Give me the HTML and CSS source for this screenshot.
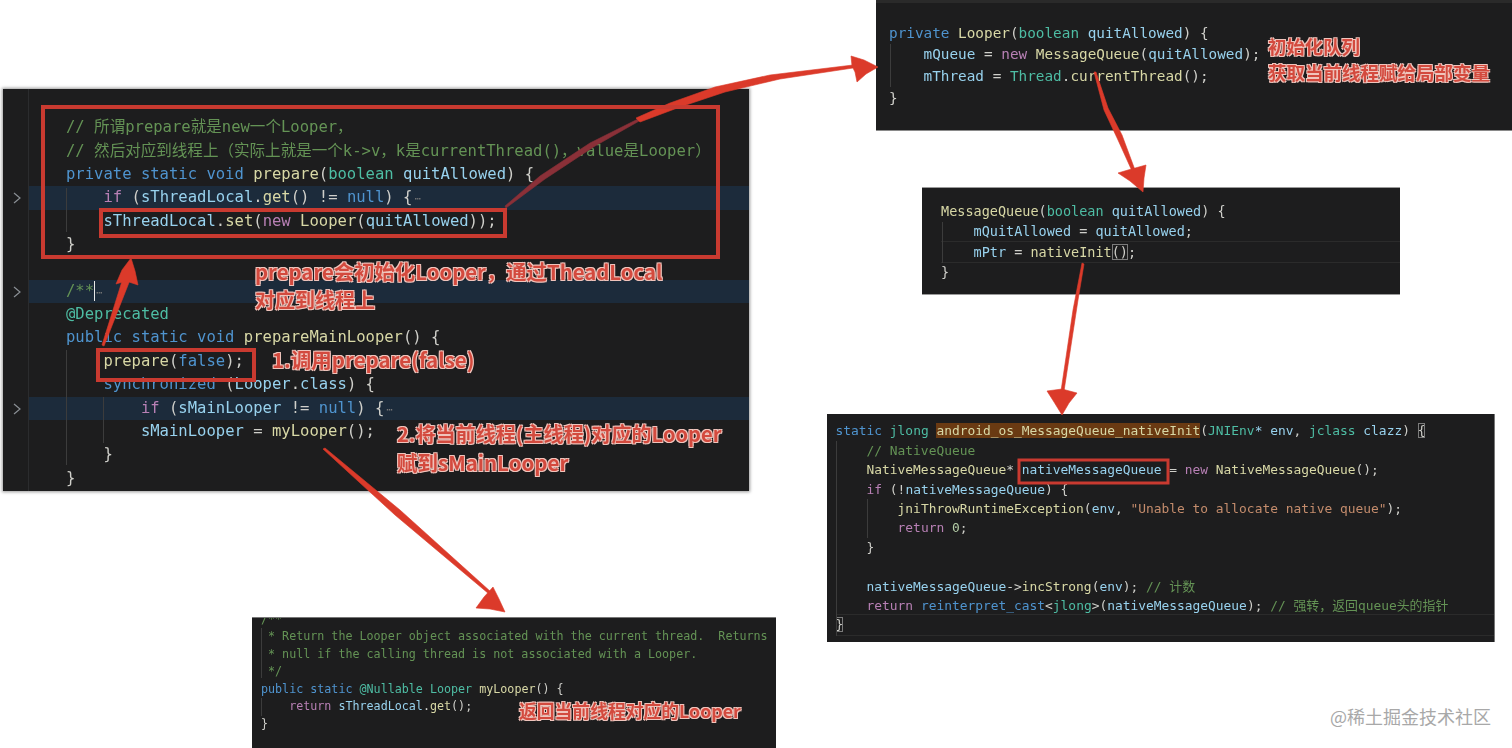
FILE: index.html
```html
<!DOCTYPE html>
<html lang="zh">
<head>
<meta charset="utf-8">
<title>Looper prepare</title>
<link rel="stylesheet" href="styles.css">
</head>
<body>
<main class="canvas">

<section class="panel panel-a">
  <i class="guide ga1"></i><i class="guide ga2"></i><i class="guide ga3"></i><i class="gutter-rule"></i>
  <div class="line"><span class="c">// 所谓prepare就是new一个Looper，</span></div>
  <div class="line"><span class="c">// 然后对应到线程上（实际上就是一个k-&gt;v，k是currentThread()，value是Looper）</span></div>
  <div class="line"><span class="k">private static void</span> <span class="f">prepare</span>(<span class="t">boolean</span> <span class="v">quitAllowed</span>) {</div>
  <div class="line hl"><svg class="chev" viewBox="0 0 8 12"><path d="M1 1l6 5-6 5"/></svg>    <span class="p">if</span> (<span class="v">sThreadLocal</span>.<span class="f">get</span>() != <span class="k">null</span>) {<span class="fold">⋯</span></div>
  <div class="line">    <span class="v">sThreadLocal</span>.<span class="f">set</span>(<span class="p">new</span> <span class="f">Looper</span>(<span class="v">quitAllowed</span>));</div>
  <div class="line">}</div>
  <div class="line"></div>
  <div class="line hl"><svg class="chev" viewBox="0 0 8 12"><path d="M1 1l6 5-6 5"/></svg><span class="c">/**</span><i class="cursor"></i><span class="fold">⋯</span></div>
  <div class="line"><span class="t">@Deprecated</span></div>
  <div class="line"><span class="k">public static void</span> <span class="f">prepareMainLooper</span>() {</div>
  <div class="line">    <span class="f">prepare</span>(<span class="k">false</span>);</div>
  <div class="line">    <span class="k">synchronized</span> (<span class="v">Looper</span>.<span class="v">class</span>) {</div>
  <div class="line hl"><svg class="chev" viewBox="0 0 8 12"><path d="M1 1l6 5-6 5"/></svg>        <span class="p">if</span> (<span class="v">sMainLooper</span> != <span class="k">null</span>) {<span class="fold">⋯</span></div>
  <div class="line">        <span class="v">sMainLooper</span> = <span class="f">myLooper</span>();</div>
  <div class="line">    }</div>
  <div class="line">}</div>
</section>

<section class="panel panel-b">
  <i class="guide gb1"></i>
  <div class="line"><span class="k">private</span> <span class="f">Looper</span>(<span class="t">boolean</span> <span class="v">quitAllowed</span>) {</div>
  <div class="line">    <span class="v">mQueue</span> = <span class="p">new</span> <span class="f">MessageQueue</span>(<span class="v">quitAllowed</span>);</div>
  <div class="line">    <span class="v">mThread</span> = <span class="t">Thread</span>.<span class="f">currentThread</span>();</div>
  <div class="line">}</div>
</section>

<section class="panel panel-c">
  <i class="guide gc1"></i>
  <div class="line"><span class="f">MessageQueue</span>(<span class="t">boolean</span> <span class="v">quitAllowed</span>) {</div>
  <div class="line">    <span class="v">mQuitAllowed</span> = <span class="v">quitAllowed</span>;</div>
  <div class="line rowline">    <span class="v">mPtr</span> = <span class="f">nativeInit</span><span class="bracket">()</span>;</div>
  <div class="line">}</div>
</section>

<section class="panel panel-d">
  <i class="guide gd1"></i><i class="guide gd2"></i>
  <div class="line"><span class="k">static</span> <span class="t">jlong</span> <span class="f mark">android_os_MessageQueue_nativeInit</span>(<span class="t">JNIEnv</span><span class="v">*</span> <span class="v">env</span>, <span class="t">jclass</span> <span class="v">clazz</span>) <span class="bracket">{</span></div>
  <div class="line">    <span class="c">// NativeQueue</span></div>
  <div class="line">    <span class="f">NativeMessageQueue</span>* <span class="v">nativeMessageQueue</span> = <span class="p">new</span> <span class="f">NativeMessageQueue</span>();</div>
  <div class="line">    <span class="p">if</span> (!<span class="v">nativeMessageQueue</span>) {</div>
  <div class="line">        <span class="f">jniThrowRuntimeException</span>(<span class="v">env</span>, <span class="s">"Unable to allocate native queue"</span>);</div>
  <div class="line">        <span class="p">return</span> <span class="n">0</span>;</div>
  <div class="line">    }</div>
  <div class="line"></div>
  <div class="line">    <span class="v">nativeMessageQueue</span>-&gt;<span class="f">incStrong</span>(<span class="v">env</span>); <span class="c">// 计数</span></div>
  <div class="line">    <span class="p">return</span> <span class="k">reinterpret_cast</span>&lt;<span class="t">jlong</span>&gt;(<span class="v">nativeMessageQueue</span>); <span class="c">// 强转，返回queue头的指针</span></div>
  <div class="line rowline"><span class="bracket">}</span></div>
</section>

<section class="panel panel-e">
  <i class="guide ge1"></i><i class="guide ge2"></i>
  <div class="line"><span class="c">/**</span></div>
  <div class="line"><span class="c"> * Return the Looper object associated with the current thread.  Returns</span></div>
  <div class="line"><span class="c"> * null if the calling thread is not associated with a Looper.</span></div>
  <div class="line"><span class="c"> */</span></div>
  <div class="line"><span class="k">public static</span> <span class="t">@Nullable</span> <span class="t">Looper</span> <span class="f">myLooper</span>() {</div>
  <div class="line">    <span class="p">return</span> <span class="v">sThreadLocal</span>.<span class="f">get</span>();</div>
  <div class="line">}</div>
</section>

<svg class="arrows" viewBox="0 0 1512 748" aria-hidden="true">
  <g class="ink">
    <polygon class="thin" points="505,206 540,176 590,143 640,118 641,120 595,146 545,179 506,208"/>
    <polygon points="636,118 670,103 715,87 770,75 853,65 853,68 780,79 725,92 680,107 640,122"/>
    <polygon points="851,56 864,60 878,67 866,74 857,82 855,72 852,66"/>
    <polygon points="1094,72 1096,72 1108,108 1122,135 1135,170 1132,171 1118,140 1104,110"/>
    <polygon points="1118,173 1128,170 1146,165 1144,178 1143,192 1130,181"/>
    <polygon points="1082,263 1084,264 1078,300 1064,391 1061,391 1073,310"/>
    <polygon points="1047,391 1062,389 1077,393 1069,403 1062,415 1054,402"/>
    <polygon points="102,345 104,346 130,280 123,278"/>
    <polygon points="116,284 122,270 131,258 135,271 138,285 126,281"/>
    <polygon points="323,449 325,448 400,510 491,592 489,594 395,515"/>
    <polygon points="476,608 484,597 493,587 499,599 505,612 490,609"/>
  </g>
  <g class="box">
    <rect x="43" y="107" width="675" height="150"/>
    <rect x="101" y="210" width="404" height="26"/>
    <rect x="98" y="350" width="156" height="30"/>
  </g>
  <rect class="box-thin" x="1019" y="460" width="149" height="23"/>
</svg>

<p class="note n1">prepare会初始化Looper，通过TheadLocal</p>
<p class="note n2">对应到线程上</p>
<p class="note n3">1.调用prepare(false)</p>
<p class="note n4">2.将当前线程(主线程)对应的Looper</p>
<p class="note n5">赋到sMainLooper</p>
<p class="note n6">初始化队列</p>
<p class="note n7">获取当前线程赋给局部变量</p>
<p class="note n8">返回当前线程对应的Looper</p>
<p class="watermark">@稀土掘金技术社区</p>

</main>
</body>
</html>
```

FILE: styles.css
```css
html, body { margin: 0; padding: 0; background: #fff; }
.canvas { position: relative; width: 1512px; height: 748px; overflow: hidden; }

.panel {
  position: absolute;
  box-sizing: border-box;
  overflow: hidden;
  background: #1d1d1e;
  color: #cfcfca;
  font-family: "DejaVu Sans Mono", "Noto Sans CJK SC", monospace;
  filter: blur(0.55px);
}
.line { white-space: pre; position: relative; height: 1lh; }
.line > .chev { position: absolute; left: -15px; top: 6px; width: 8px; height: 12px; fill: none; stroke: #8a8f94; stroke-width: 1.2; }
.hl { background: #1c2b3b; }
.rowline { box-shadow: 0 -1px 0 #2b2b2b, 0 1px 0 #2b2b2b; }
.cursor { display: inline-block; width: 1px; height: 20px; margin-right: -1px; background: #e8e8e8; vertical-align: middle; }

.c { color: #649355; }
.k { color: #4f94cf; }
.p { color: #b880b5; }
.t { color: #4ebda4; }
.v { color: #98d2ee; }
.f { color: #d8d8a6; }
.s { color: #c48c6c; }
.n { color: #b5cea8; }
.fold { color: #777; font-size: 0.7em; margin-left: 2px; }
.mark { background: #6a3a12; }
.bracket { outline: 1px solid #7b7b7b; outline-offset: -1px; }

.guide { position: absolute; width: 1px; background: #3c3c3c; z-index: 1; }
.gutter-rule { position: absolute; left: 25px; top: 0; bottom: 0; width: 1px; background: #2b2c2e; z-index: 1; }

.panel-a {
  left: 3px; top: 89px; width: 746px; height: 402px;
  padding: 27.4px 0 0 63px;
  font-size: 15.55px; line-height: 23.35px;
  box-shadow: 0 0 3px 1px #9a9a9a;
}
.panel-a .hl { margin-left: -38px; padding-left: 38px; }
.ga1 { left: 63px; top: 99px; height: 44px; }
.ga2 { left: 63px; top: 261px; height: 115px; }
.ga3 { left: 100px; top: 308px; height: 46px; }

.panel-b {
  left: 876px; top: 0; width: 636px; height: 131px;
  padding: 19.8px 0 0 13px;
  font-size: 14.35px; line-height: 21.6px;
  border-top: 3px solid #2a2a2a;
  border-bottom: 1px solid #8a8a8a;
}
.gb1 { left: 14px; top: 41px; height: 43px; }

.panel-c {
  left: 922px; top: 187px; width: 478px; height: 108px;
  padding: 13px 0 0 19px;
  font-size: 13.5px; line-height: 20.4px;
  border-top: 1px solid #9a9a9a;
  border-bottom: 1px solid #9a9a9a;
}
.gc1 { left: 20px; top: 34px; height: 41px; }

.panel-d {
  left: 827px; top: 414px; width: 668px; height: 228px;
  padding: 7.4px 0 0 8.5px;
  font-size: 12.9px; line-height: 19.4px;
  border-right: 1px solid #777;
}
.gd1 { left: 9px; top: 27px; height: 195px; }
.gd2 { left: 40px; top: 85px; height: 39px; }

.panel-e {
  left: 252px; top: 617px; width: 524px; height: 131px;
  padding: 0 0 0 9px;
  font-size: 11.7px; line-height: 17.5px;
  border-top: 1px solid #777;
}
.panel-e .line:first-of-type { margin-top: -7.5px; }
.ge1 { left: 9px; top: 10px; height: 50px; }
.ge2 { left: 9px; top: 80px; height: 18px; }

.arrows { position: absolute; left: 0; top: 0; width: 1512px; height: 748px; z-index: 2; filter: blur(0.4px); }
.ink polygon { fill: #db3a2a; stroke: #db3a2a; stroke-width: 0.6; stroke-linejoin: round; }
.ink .thin { fill: #8a3038; stroke: #8a3038; }
.box rect { fill: none; stroke: #c93a30; stroke-width: 4; }
.box-thin { fill: none; stroke: #c93a30; stroke-width: 3; }

.note {
  position: absolute;
  z-index: 3;
  margin: 0;
  white-space: nowrap;
  font-family: "Noto Sans CJK SC", sans-serif;
  font-weight: 700;
  color: #d34a3e;
  line-height: 1;
  text-shadow: 1px 1px 0 #f0c4bc, -1px -1px 0 #f0c4bc, 1px -1px 0 #f0c4bc, -1px 1px 0 #f0c4bc;
  filter: blur(0.45px);
}
.n1 { left: 255px; top: 261px; font-size: 20.35px; }
.n2 { left: 255px; top: 290px; font-size: 20px; }
.n3 { left: 272px; top: 349px; font-size: 20.5px; }
.n4 { left: 397px; top: 424px; font-size: 20.1px; }
.n5 { left: 397px; top: 452px; font-size: 20.5px; }
.n6 { left: 1268px; top: 37px; font-size: 18.4px; }
.n7 { left: 1268px; top: 63px; font-size: 18.5px; }
.n8 { left: 519px; top: 702px; font-size: 17.8px; }

.watermark {
  position: absolute;
  left: 1330px; top: 706px;
  margin: 0;
  font-family: "Noto Sans CJK SC", sans-serif;
  font-size: 18px;
  line-height: 20px;
  color: #a8a8a8;
  white-space: nowrap;
}
```
